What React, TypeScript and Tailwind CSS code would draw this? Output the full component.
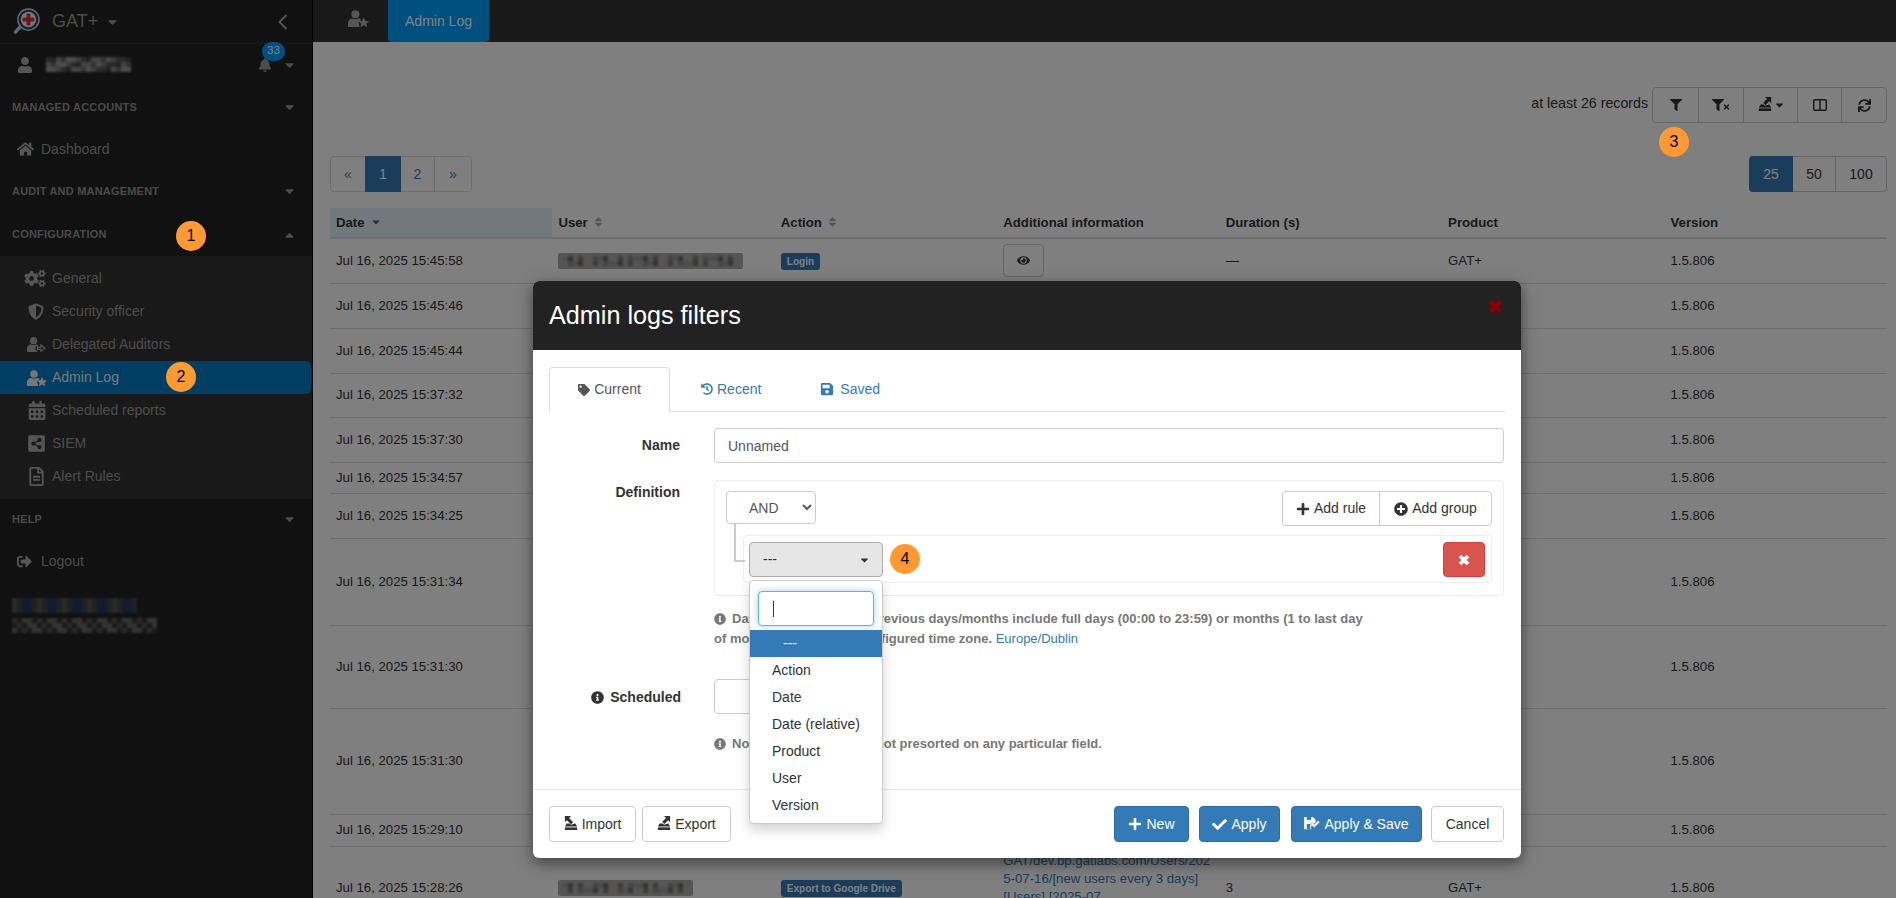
import React from 'react';
import {
  FaBell, FaCalendarAlt, FaCaretDown, FaCaretUp, FaCheck, FaCogs, FaEye, FaFilter,
  FaHistory, FaHome, FaInfoCircle, FaPlus, FaPlusCircle, FaRegFileAlt, FaSave, FaShareAltSquare, FaShieldAlt,
  FaSignOutAlt, FaSort, FaSync, FaTag, FaTimes, FaUser,
} from 'react-icons/fa';

const FONT = "font-['Liberation_Sans',Arial,sans-serif]";

// Pixelated stand-in for the redacted text
const Mosaic: React.FC<{ width: number; height: number; colors: string[]; bg?: string }> = ({ width, height, colors, bg }) => {
  const cell = 5;
  const cols = Math.floor(width / cell);
  const rows = Math.floor(height / cell);
  const cells = [];
  for (let i = 0; i < cols * rows; i++) {
    const n = (i * i * 3 + i * 7 + (i % 5) * 13) % colors.length;
    cells.push(<div key={i} style={{ width: cell, height: cell, background: colors[n] }} />);
  }
  return (
    <div className="flex flex-wrap overflow-hidden blur-[1.2px]" style={{ width: cols * cell, height: rows * cell, background: bg }}>
      {cells}
    </div>
  );
};

const UserStar = ({ className }: { className?: string }) => (
  <svg viewBox="0 0 20 16" className={className} fill="currentColor">
    <circle cx="7" cy="4" r="3.8" />
    <path d="M0 16v-3.5C0 9.6 2 8 4 8c1 .7 5 .7 6 0 1 0 2 .5 2.6 1.3L10 11.5l1.2 4.5z" />
    <path d="M15 7l1.5 3.2 3.5.4-2.6 2.3.8 3.4-3.2-1.8-3.2 1.8.8-3.4-2.6-2.3 3.5-.4z" />
  </svg>
);

const UserArrow = ({ className }: { className?: string }) => (
  <svg viewBox="0 0 20 16" className={className} fill="currentColor">
    <circle cx="7" cy="4" r="3.8" />
    <path d="M0 16v-3.5C0 9.6 2 8 4 8c1 .7 5 .7 6 0 .8 0 1.4.2 2 .6V10H9v4h2v2z" />
    <path d="M14 7l6 5-6 4.500v-2.800h-3.500v-3.400H14zM15.300 10v1.600h-3.500v.8h3.500V14l2.600-1.900z" />
  </svg>
);

const Stamp = ({ className, flip }: { className?: string; flip?: boolean }) => (
  <svg viewBox="0 0 16 16" className={className} fill="currentColor">
    <rect x="1" y="13" width="14" height="3" />
    <path d="M3 8.500h3.500L8 10l4.500-1.500h.5l2 3.500H1z" />
    {flip ? <path d="M1 0h7L5.800 2.200 10.500 7 8 9.500 3.300 4.800 1 7z" /> : <path d="M15 0v7l-2.200-2.200L8.500 9 6 6.500l4.300-4.300L8 0z" />}
  </svg>
);

const ColumnsIcon = ({ className }: { className?: string }) => (
  <svg viewBox="0 0 14 12" className={className} fill="none" stroke="currentColor" strokeWidth="1.500">
    <rect x=".75" y=".75" width="12.500" height="10.500" rx="1" />
    <path d="M7 1v10" />
  </svg>
);

const SaveCheck = ({ className }: { className?: string }) => (
  <svg viewBox="0 0 18 16" className={className} fill="currentColor">
    <path d="M0 1h10l3 3v3l-5 5v3H0z" />
    <rect x="3" y="1" width="5" height="3.500" fill="#337ab7" />
    <rect x="3" y="9" width="4" height="6" fill="#337ab7" />
    <path d="M7.500 9.500l2-2 2 2 4.500-4.500 2 2-6.500 6.500z" stroke="#337ab7" strokeWidth=".6" />
  </svg>
);

const BoldX = ({ className }: { className?: string }) => (
  <svg viewBox="0 0 18 18" className={className} fill="currentColor">
    <path d="M1 5l4-4 4 4 4-4 4 4-4 4 4 4-4 4-4-4-4 4-4-4 4-4z" />
  </svg>
);

const Logo = () => (
  <svg viewBox="0 0 28 28" className="w-[27px] h-[27px]">
    <path d="M8 19L2.500 25" stroke="#bcd3e3" strokeWidth="3.500" strokeLinecap="round" />
    <circle cx="16" cy="12" r="11" fill="#24405a" stroke="#c4d6e2" strokeWidth="1.500" />
    <circle cx="16" cy="12" r="8" fill="#eee" />
    <path d="M14 6h4v4h4v4h-4v4h-4v-4h-4v-4h4z" fill="#e3262e" />
  </svg>
);

const Section: React.FC<{ label: string; className: string; open?: boolean }> = ({ label, className, open }) => (
  <div className={`flex items-center justify-between pl-[12px] pr-[17px] ${className}`}>
    <span className="text-[11px] font-bold text-[#949494] tracking-[0.2px]">{label}</span>
    {open ? <FaCaretUp className="w-[11px] h-[14px] text-[#999]" /> : <FaCaretDown className="w-[11px] h-[14px] text-[#999]" />}
  </div>
);

const SubItem: React.FC<{ icon: React.ReactNode; label: string; active?: boolean }> = ({ icon, label, active }) => (
  <div className={`flex items-center h-[33px] text-[14px] ${active ? 'bg-[#007cc6] rounded-r-[5px] text-[#eee] mr-px' : 'text-[#999]'}`}>
    <span className="w-[52px] flex justify-end pr-[6px]">{icon}</span>
    {label}
  </div>
);

const sideIcon = 'w-[19px] h-[17px] text-[#aaa]';

const Sidebar = () => (
  <aside className="w-[313px] shrink-0 bg-[#222] border-r border-black">
    <div className="h-[44px] border-b border-[#333] flex items-center pl-[13px] pr-[24px]">
      <Logo />
      <span className="ml-[12px] text-[18px] text-[#999]">GAT+</span>
      <FaCaretDown className="ml-[9px] w-[11px] h-[14px] text-[#999]" />
      <svg viewBox="0 0 10 16" className="ml-auto w-[10px] h-[16px] text-[#aaa]" fill="none" stroke="currentColor" strokeWidth="1.800">
        <path d="M8.500 1L1.500 8l7 7" />
      </svg>
    </div>
    <div className="h-[41px] flex items-center pl-[18px] pr-[17px]">
      <FaUser className="w-[14px] h-[16px] text-[#aaa]" />
      <span className="ml-[14px]">
        <Mosaic width={85} height={15} colors={['#555', '#777', '#999', '#666', '#888', '#444']} />
      </span>
      <span className="ml-auto relative flex items-center">
        <FaBell className="w-[14px] h-[14px] text-[#999] mr-[12px]" />
        <FaCaretDown className="w-[11px] h-[14px] text-[#999]" />
        <span className="absolute left-[4px] top-[-16px] w-[23px] h-[19px] rounded-full bg-[#00a0ff] text-white text-[11.500px] flex items-center justify-center">33</span>
      </span>
    </div>
    <Section label="MANAGED ACCOUNTS" className="h-[44px]" />
    <div className="h-[40px] flex items-center pl-[17px] text-[14px] text-[#999]">
      <FaHome className="w-[17px] h-[16px] text-[#aaa] mr-[7px]" />
      Dashboard
    </div>
    <Section label="AUDIT AND MANAGEMENT" className="h-[44px]" />
    <Section label="CONFIGURATION" className="h-[43px]" open />
    <div className="bg-[#333] py-[6px]">
      <SubItem icon={<FaCogs className="w-[22px] h-[17px] text-[#aaa]" />} label="General" />
      <SubItem icon={<FaShieldAlt className="w-[16px] h-[17px] text-[#aaa] mr-[2px]" />} label="Security officer" />
      <SubItem icon={<UserArrow className={sideIcon} />} label="Delegated Auditors" />
      <SubItem icon={<UserStar className="w-[20px] h-[16px] text-[#eee] -mr-[1px]" />} label="Admin Log" active />
      <SubItem icon={<FaCalendarAlt className="w-[18px] h-[19px] text-[#aaa]" />} label="Scheduled reports" />
      <SubItem icon={<FaShareAltSquare className="w-[19px] h-[19px] text-[#aaa]" />} label="SIEM" />
      <SubItem icon={<FaRegFileAlt className="w-[17px] h-[19px] text-[#aaa] mr-[1px]" />} label="Alert Rules" />
    </div>
    <Section label="HELP" className="h-[40px]" />
    <div className="h-[44px] flex items-center pl-[16px] text-[14px] text-[#999]">
      <FaSignOutAlt className="w-[17px] h-[15px] text-[#aaa] mr-[8px]" />
      Logout
    </div>
    <div className="pl-[12px] pt-[15px]">
      <Mosaic width={125} height={15} colors={['#555', '#26456e', '#1e3a60', '#444', '#222']} />
      <div className="h-[5px]" />
      <Mosaic width={145} height={15} colors={['#555', '#444', '#666', '#333', '#222']} />
    </div>
  </aside>
);

const ToolBtn: React.FC<{ className: string; children: React.ReactNode }> = ({ className, children }) => (
  <div className={`flex items-center justify-center h-full border-l border-[#ccc] first:border-l-0 ${className}`}>{children}</div>
);

const Toolbar = () => (
  <div className="flex items-center justify-end">
    <span className="text-[14.200px] text-[#333] mr-[4px] mb-[2px]">at least 26 records</span>
    <div className="flex h-[36px] border border-[#ccc] rounded-[4px] text-[#333]">
      <ToolBtn className="w-[45px]"><FaFilter className="w-[12px] h-[12px]" /></ToolBtn>
      <ToolBtn className="w-[45px]">
        <span className="flex items-end">
          <FaFilter className="w-[12px] h-[12px]" />
          <FaTimes className="w-[7px] h-[8px] -ml-px" />
        </span>
      </ToolBtn>
      <ToolBtn className="w-[54px]">
        <Stamp className="w-[14px] h-[14px] -mt-[2px]" />
        <FaCaretDown className="w-[9px] h-[12px] ml-[3px]" />
      </ToolBtn>
      <ToolBtn className="w-[44px]"><ColumnsIcon className="w-[14px] h-[12px]" /></ToolBtn>
      <ToolBtn className="w-[45px]"><FaSync className="w-[13px] h-[13px]" /></ToolBtn>
    </div>
  </div>
);

const Pagers = () => (
  <div className="flex justify-between mt-[33px] text-[14px]">
    <div className="flex h-[36px] border border-[#ddd] rounded-[4px]">
      <div className="w-[34px] flex items-center justify-center text-[#777]">«</div>
      <div className="w-[36px] -my-px flex items-center justify-center bg-[#337ab7] text-white">1</div>
      <div className="w-[34px] flex items-center justify-center text-[#337ab7] border-r border-[#ddd]">2</div>
      <div className="w-[36px] flex items-center justify-center text-[#337ab7]">»</div>
    </div>
    <div className="flex h-[36px] text-[#333]">
      <div className="w-[44px] flex items-center justify-center bg-[#337ab7] text-white rounded-l-[4px]">25</div>
      <div className="w-[43px] flex items-center justify-center border-y border-r border-[#ccc]">50</div>
      <div className="w-[51px] flex items-center justify-center border-y border-r border-[#ccc] rounded-r-[4px]">100</div>
    </div>
  </div>
);

const Sortable: React.FC<{ label: string }> = ({ label }) => (
  <span className="inline-flex items-center">
    {label}
    <FaSort className="w-[9px] h-[12px] ml-[6px] text-[#aaa]" />
  </span>
);

const rows = [
  { date: 'Jul 16, 2025 15:45:58', h: 'h-[45px]' },
  { date: 'Jul 16, 2025 15:45:46', h: 'h-[45px]' },
  { date: 'Jul 16, 2025 15:45:44', h: 'h-[45px]' },
  { date: 'Jul 16, 2025 15:37:32', h: 'h-[44px]' },
  { date: 'Jul 16, 2025 15:37:30', h: 'h-[45px]' },
  { date: 'Jul 16, 2025 15:34:57', h: 'h-[31px]' },
  { date: 'Jul 16, 2025 15:34:25', h: 'h-[45px]' },
  { date: 'Jul 16, 2025 15:31:34', h: 'h-[87px]' },
  { date: 'Jul 16, 2025 15:31:30', h: 'h-[83px]' },
  { date: 'Jul 16, 2025 15:31:30', h: 'h-[106px]' },
  { date: 'Jul 16, 2025 15:29:10', h: 'h-[32px]' },
  { date: 'Jul 16, 2025 15:28:26', h: 'h-[84px]' },
];

const userColors = ['#999', '#8a8a8a', '#aaa', '#777', '#b0a8a0', '#6a6a6a'];

const LogTable = () => (
  <table className="table-fixed w-full mt-[16px] text-[13.200px] text-[#333] border-collapse">
    <thead>
      <tr className="h-[30px] border-b-2 border-[#ddd] text-left font-bold">
        <th className="px-[6px] bg-[#e0f4fc]">
          <span className="inline-flex items-center">Date<FaCaretDown className="w-[10px] h-[12px] ml-[6px] text-[#666]" /></span>
        </th>
        <th className="px-[6px]"><Sortable label="User" /></th>
        <th className="px-[6px]"><Sortable label="Action" /></th>
        <th className="px-[6px]">Additional information</th>
        <th className="px-[6px]">Duration (s)</th>
        <th className="px-[6px]">Product</th>
        <th className="px-[6px]">Version</th>
      </tr>
    </thead>
    <tbody>
      {rows.map((row, i) => (
        <tr key={i} className={`${row.h} border-b border-[#ddd]`}>
          <td className="px-[6px] align-middle">{row.date}</td>
          <td className="px-[6px] align-middle">
            {(i === 0 || i === 11) && (
              <div className="bg-[#aaa] rounded-[2px] px-[5px] py-[3px] w-fit">
                <Mosaic width={i === 0 ? 175 : 125} height={10} colors={userColors} />
              </div>
            )}
          </td>
          <td className="px-[6px] align-middle">
            {i === 0 && <span className="inline-block bg-[#337ab7] text-white text-[10px] font-bold rounded-[3px] px-[6px] py-[1px]">Login</span>}
            {i === 11 && <span className="inline-block bg-[#337ab7] text-white text-[10px] font-bold rounded-[3px] px-[6px] py-[1px]">Export to Google Drive</span>}
          </td>
          <td className="px-[6px] py-[5px] align-middle">
            {i === 0 && (
              <span className="flex items-center justify-center w-[41px] h-[33px] border border-[#ccc] rounded-[4px]">
                <FaEye className="w-[13px] h-[13px]" />
              </span>
            )}
            {i === 11 && (
              <span className="block text-[#337ab7] break-all leading-[18px]">
                GAT/dev.bp.gatlabs.com/Users/2025-07-16/[new users every 3 days]
                <br />
                [Users] [2025-07
                <br />
                -16T15:28]
              </span>
            )}
          </td>
          <td className="px-[6px] align-middle">{i === 0 ? '—' : i === 11 ? '3' : ''}</td>
          <td className="px-[6px] align-middle">{i === 0 || i === 11 ? 'GAT+' : ''}</td>
          <td className="px-[6px] align-middle">1.5.806</td>
        </tr>
      ))}
    </tbody>
  </table>
);

const Marker: React.FC<{ n: number; className?: string }> = ({ n, className }) => (
  <div className={`w-[30px] h-[30px] rounded-full bg-[#ff9a33] text-black text-[16px] flex items-center justify-center ${className ?? ''}`}>{n}</div>
);

const BtnPrimary: React.FC<{ className: string; children: React.ReactNode }> = ({ className, children }) => (
  <div className={`h-[36px] flex items-center justify-center gap-[4px] bg-[#337ab7] border border-[#2e6da4] rounded-[4px] text-white text-[14px] ${className}`}>{children}</div>
);

const BtnPlain: React.FC<{ className: string; children: React.ReactNode }> = ({ className, children }) => (
  <div className={`h-[36px] flex items-center justify-center gap-[4px] bg-white border border-[#ccc] rounded-[4px] text-[#333] text-[14px] ${className}`}>{children}</div>
);

const FieldOptions = ['Action', 'Date', 'Date (relative)', 'Product', 'User', 'Version'];

const FieldDropdown = () => (
  <div className="absolute left-0 top-[38px] w-[134px] h-[244px] bg-white border border-[#ccc] rounded-[4px] shadow-[0_6px_12px_rgba(0,0,0,0.175)] z-10">
    <div className="px-[8px] pt-[10px]">
      <div className="h-[35px] border border-[#66afe9] rounded-[4px] shadow-[0_0_6px_rgba(102,175,233,0.6)] flex items-center pl-[14px]">
        <span className="w-px h-[16px] bg-[#333]" />
      </div>
    </div>
    <div className="mt-[4px] h-[27px] bg-[#337ab7] text-white text-[14px] flex items-center pl-[33px]">---</div>
    {FieldOptions.map(option => (
      <div key={option} className="h-[27px] text-[14px] text-[#333] flex items-center pl-[22px]">{option}</div>
    ))}
  </div>
);

const FiltersModal = () => (
  <div className="absolute left-[533px] top-[281px] w-[988px] bg-white rounded-[6px] shadow-[0_5px_15px_rgba(0,0,0,0.5)] overflow-visible">
    <div className="h-[69px] bg-[#222] rounded-t-[6px] flex items-center justify-between pl-[16px] pr-[18px]">
      <span className="text-[25.200px] text-white">Admin logs filters</span>
      <BoldX className="w-[15px] h-[15px] text-[#8b0000] -mt-[19px]" />
    </div>

    <div className="h-[439px] px-[16px] pt-[17px]">
      <div className="flex h-[45px] border-b border-[#ddd] text-[14px]">
        <div className="w-[121px] h-[45px] bg-white border border-[#ddd] border-b-white rounded-t-[4px] flex items-center justify-center gap-[4px] text-[#555]">
          <FaTag className="w-[12px] h-[12px]" />Current
        </div>
        <div className="ml-[31px] flex items-center gap-[4px] text-[#337ab7]">
          <FaHistory className="w-[12px] h-[12px]" />Recent
        </div>
        <div className="ml-[59px] flex items-center gap-[6px] text-[#337ab7]">
          <FaSave className="w-[14px] h-[14px]" />Saved
        </div>
      </div>

      <div className="flex mt-[16px]">
        <div className="w-[131px] h-[35px] flex items-center justify-end font-bold text-[14px] text-[#333]">Name</div>
        <input readOnly value="Unnamed" className="ml-[34px] w-[790px] h-[35px] border border-[#ccc] rounded-[4px] px-[13px] text-[14px] text-[#555]" />
      </div>

      <div className="flex mt-[17px]">
        <div className="w-[131px] pt-[2px] text-right font-bold text-[14px] text-[#333]">Definition</div>
        <div className="ml-[34px] w-[790px] h-[116px] border border-[#eee] rounded-[4px] pt-[10px] px-[11px]">
          <div className="flex items-start justify-between">
            <select className="w-[90px] h-[33px] border border-[#ccc] rounded-[4px] bg-white pl-[18px] text-[14px] text-[#555]" defaultValue="AND">
              <option>AND</option>
              <option>OR</option>
            </select>
            <div className="flex h-[35px] border border-[#ccc] rounded-[4px] text-[14px] text-[#333]">
              <div className="w-[97px] flex items-center justify-center gap-[4px] border-r border-[#ccc]"><FaPlus className="w-[14px] h-[14px]" />Add rule</div>
              <div className="w-[111px] flex items-center justify-center gap-[4px]"><FaPlusCircle className="w-[14px] h-[14px]" />Add group</div>
            </div>
          </div>
          <div className="relative mt-[9px] ml-[17px] h-[48px] border border-[#eee] rounded-[4px] px-[5px] pt-[6px] flex justify-between">
            <div className="absolute -left-[10px] -top-[13px] w-[11px] h-[39px] border-l-2 border-b-2 border-[#ccc] rounded-bl-[2px]" />
            <div className="relative">
              <div className="w-[134px] h-[35px] bg-[#e6e6e6] border border-[#adadad] rounded-[4px] flex items-center justify-between pl-[13px] pr-[13px] text-[14px] text-[#333]">
                ---
                <FaCaretDown className="w-[9px] h-[12px]" />
              </div>
              <FieldDropdown />
              <Marker n={4} className="absolute left-[141px] top-[2px]" />
            </div>
            <div className="w-[42px] h-[35px] bg-[#d9534f] border border-[#d43f3a] rounded-[4px] flex items-center justify-center mr-[1px]">
              <BoldX className="w-[12px] h-[12px] text-white" />
            </div>
          </div>
        </div>
      </div>

      <div className="ml-[165px] mt-[13px] text-[13px] leading-[20px] font-bold text-[#777]">
        <FaInfoCircle className="inline w-[12px] h-[12px] mr-[6px] -mt-[2px]" />
        Date ranges based on previous days/months include full days (00:00 to 23:59) or months (1 to last day
        <br />
        of months) within your configured time zone. <a className="font-normal text-[#337ab7]">Europe/Dublin</a>
      </div>

      <div className="flex mt-[30px]">
        <div className="w-[132px] h-[35px] pt-[1px] flex items-center justify-end gap-[6px] font-bold text-[14px] text-[#333]">
          <FaInfoCircle className="w-[13px] h-[13px]" />Scheduled
        </div>
        <div className="ml-[33px] w-[100px] h-[35px] border border-[#ccc] rounded-[4px]" />
      </div>

      <div className="ml-[165px] mt-[20px] text-[13px] leading-[20px] font-bold text-[#777]">
        <FaInfoCircle className="inline w-[12px] h-[12px] mr-[6px] -mt-[2px]" />
        Note: these results are not presorted on any particular field.
      </div>
    </div>

    <div className="h-[69px] border-t border-[#e5e5e5] pl-[16px] pr-[17px] pt-[16px] flex">
      <BtnPlain className="w-[87px]"><Stamp className="w-[14px] h-[14px] -mt-[2px]" flip />Import</BtnPlain>
      <BtnPlain className="w-[89px] ml-[6px]"><Stamp className="w-[14px] h-[14px] -mt-[2px]" />Export</BtnPlain>
      <BtnPrimary className="w-[75px] ml-auto"><FaPlus className="w-[14px] h-[14px]" />New</BtnPrimary>
      <BtnPrimary className="w-[81px] ml-[10px]"><FaCheck className="w-[15px] h-[15px]" />Apply</BtnPrimary>
      <BtnPrimary className="w-[131px] ml-[11px]"><SaveCheck className="w-[16px] h-[14px] -mt-[3px]" />Apply &amp; Save</BtnPrimary>
      <BtnPlain className="w-[73px] ml-[9px]">Cancel</BtnPlain>
    </div>
  </div>
);

export default function App() {
  return (
    <div className={`relative h-[898px] overflow-hidden flex bg-white ${FONT}`}>
      <Sidebar />
      <main className="flex-1 min-w-0">
        <div className="h-[42px] bg-[#333] flex">
          <UserStar className="ml-[35px] mt-[10px] w-[21px] h-[17px] text-[#aaa]" />
          <div className="ml-[19px] w-[101px] bg-[#00a0ff] rounded-b-[4px] flex items-center justify-center text-[14px] text-white">Admin Log</div>
        </div>
        <div className="pl-[17px] pr-[9px] pt-[45px]">
          <Toolbar />
          <Pagers />
          <LogTable />
        </div>
      </main>

      {/* modal backdrop, the numbered callouts sit on top of it */}
      <div className="absolute inset-0 bg-black/50">
        <Marker n={1} className="absolute left-[176px] top-[221px]" />
        <Marker n={2} className="absolute left-[166px] top-[362px]" />
        <Marker n={3} className="absolute left-[1659px] top-[127px]" />
        <FiltersModal />
      </div>
    </div>
  );
}
